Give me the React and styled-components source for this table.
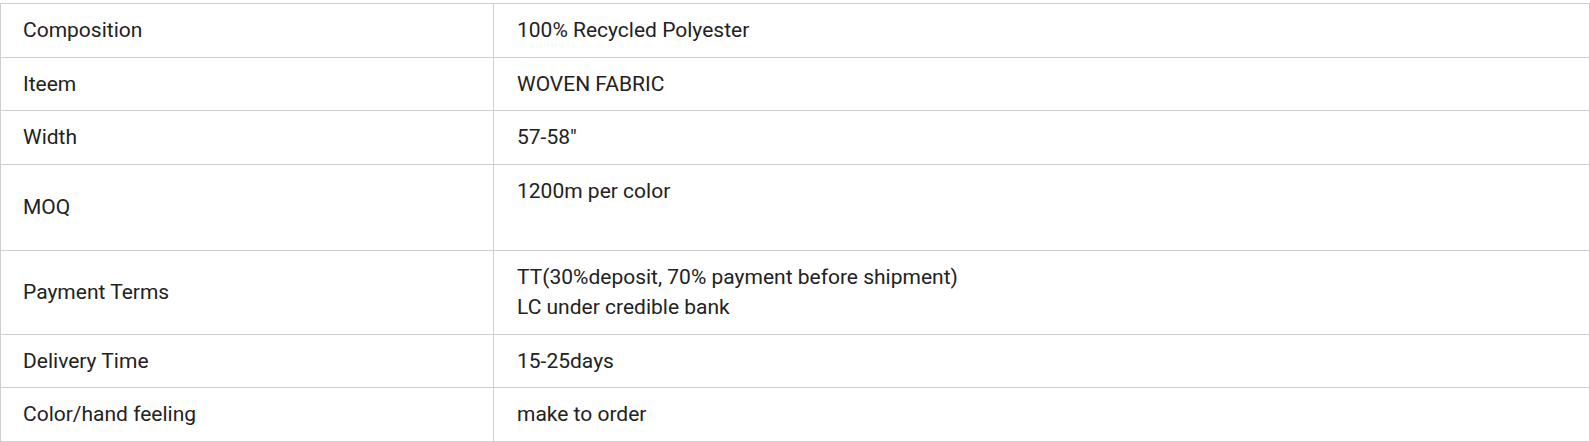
import styled, { createGlobalStyle } from "styled-components";

const GlobalStyle = createGlobalStyle`
  html, body {
    margin: 0;
    padding: 0;
    background: #fff;
  }
  body {
    font-family: Roboto, "Liberation Sans", sans-serif;
  }
`;

const specs = [
  { label: "Composition", value: ["100% Recycled Polyester"] },
  { label: "Iteem", value: ["WOVEN FABRIC"] },
  { label: "Width", value: ["57-58\""] },
  { label: "MOQ", value: ["1200m per color"], tall: true },
  {
    label: "Payment Terms",
    value: ["TT(30%deposit, 70% payment before shipment)", "LC under credible bank"],
  },
  { label: "Delivery Time", value: ["15-25days"] },
  { label: "Color/hand feeling", value: ["make to order"] },
];

export default function App() {
  return (
    <>
      <GlobalStyle />
      <SpecTable>
        <colgroup>
          <col style={{ width: 493 }} />
          <col />
        </colgroup>
        <tbody>
          {specs.map((row) => (
            <Row key={row.label}>
              <LabelCell>{row.label}</LabelCell>
              <ValueCell>
                {row.value.map((line) => (
                  <Line key={line}>{line}</Line>
                ))}
                {row.tall && <Spacer />}
              </ValueCell>
            </Row>
          ))}
        </tbody>
      </SpecTable>
    </>
  );
}

const SpecTable = styled.table`
  width: 1590px;
  margin-top: 3px;
  border-collapse: collapse;
  table-layout: fixed;
  font-size: 21px;
  line-height: 30px;
  color: #222;
`;

const Row = styled.tr``;

const Cell = styled.td`
  border: 1px solid #cfcfcf;
  padding: 11.25px 22px;
`;

const LabelCell = styled(Cell)`
  vertical-align: middle;
`;

const ValueCell = styled(Cell)`
  vertical-align: top;
  padding-left: 23px;
`;

const Line = styled.div``;

const Spacer = styled.div`
  height: 33px;
`;
